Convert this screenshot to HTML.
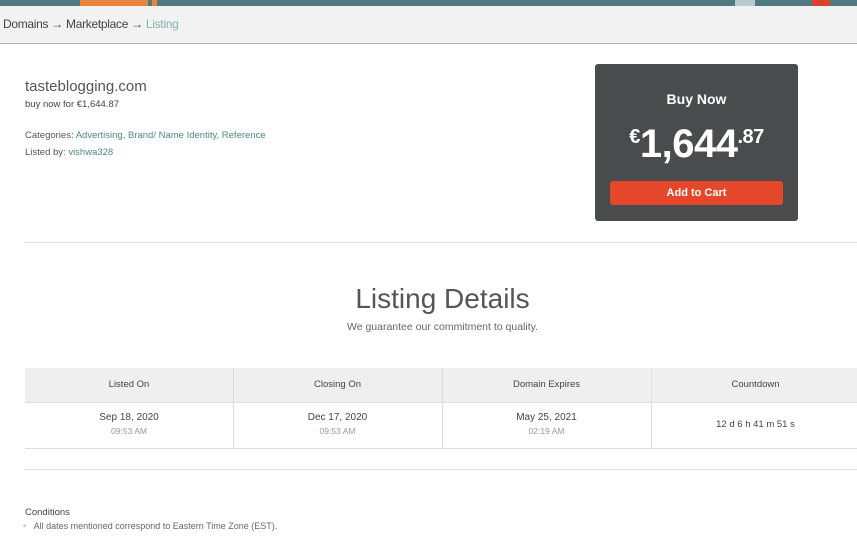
<!DOCTYPE html>
<html><head><style>
body{margin:0;width:857px;height:541px;overflow:hidden;background:#fff;font-family:"Liberation Sans",sans-serif;color:#444;position:relative}
.a{position:absolute}
</style></head><body>
<div class="a" style="left:0;top:0;width:857px;height:6px;background:#4f7b7f"></div>
<div class="a" style="left:80px;top:0;width:68px;height:6px;background:#e8843c"></div>
<div class="a" style="left:152px;top:0;width:5px;height:6px;background:#e8843c"></div>
<div class="a" style="left:812px;top:0;width:18px;height:6px;background:#d8412a"></div>
<div class="a" style="left:735px;top:0;width:20px;height:6px;background:#b9c9cc"></div>
<div class="a" style="left:0;top:6px;width:857px;height:37px;background:#f2f2f2;border-bottom:1.5px solid #a9bcb9"></div>
<div class="a" style="left:3px;top:17px;font-size:12px;color:#444;letter-spacing:-0.3px">Domains → Marketplace → <span style="color:#7fb4b0">Listing</span></div>

<div class="a" style="left:25px;top:78px;font-size:15px;color:#555">tasteblogging.com</div>
<div class="a" style="left:25px;top:99px;font-size:9.5px;color:#444">buy now for €1,644.87</div>
<div class="a" style="left:25px;top:130px;font-size:9.5px;color:#555">Categories: <span style="color:#4d8a86">Advertising, Brand/ Name Identity, Reference</span></div>
<div class="a" style="left:25px;top:147px;font-size:9.5px;color:#555">Listed by: <span style="color:#4d8a86">vishwa328</span></div>

<div class="a" style="left:595px;top:64px;width:203px;height:157px;background:#4a4b4d;border-radius:3px"></div>
<div class="a" style="left:595px;top:91px;width:203px;text-align:center;color:#fff;font-weight:bold;font-size:14px">Buy Now</div>
<div class="a" style="left:595px;top:112px;width:203px;text-align:center;color:#fff;font-weight:bold;font-size:40px;line-height:50px;letter-spacing:-0.5px"><span style="font-size:20px;vertical-align:14px">€</span>1,644<span style="font-size:20px;vertical-align:14px">.87</span></div>
<div class="a" style="left:610px;top:181px;width:173px;height:24px;background:#e5472b;border-radius:3px;color:#fff;font-weight:bold;font-size:11px;text-align:center;line-height:24px">Add to Cart</div>

<div class="a" style="left:25px;top:242px;width:832px;height:1px;background:#ddd"></div>
<div class="a" style="left:0;top:283px;width:885px;text-align:center;font-size:28px;color:#555">Listing Details</div>
<div class="a" style="left:0;top:321px;width:885px;text-align:center;font-size:10.5px;color:#666">We guarantee our commitment to quality.</div>

<div class="a" style="left:25px;top:368px;width:840px;height:34px;background:#efefef;border-bottom:1px solid #ddd"></div>
<div class="a" style="left:25px;top:448px;width:840px;height:1px;background:#ddd"></div>
<div class="a" style="left:233px;top:368px;width:1px;height:80px;background:#ddd"></div>
<div class="a" style="left:442px;top:368px;width:1px;height:80px;background:#ddd"></div>
<div class="a" style="left:651px;top:368px;width:1px;height:80px;background:#ddd"></div>
<div class="a" style="left:25px;top:379px;width:208px;text-align:center;font-size:9.5px">Listed On</div>
<div class="a" style="left:233px;top:379px;width:209px;text-align:center;font-size:9.5px">Closing On</div>
<div class="a" style="left:442px;top:379px;width:209px;text-align:center;font-size:9.5px">Domain Expires</div>
<div class="a" style="left:651px;top:379px;width:209px;text-align:center;font-size:9.5px">Countdown</div>
<div class="a" style="left:25px;top:412px;width:208px;text-align:center;font-size:10px">Sep 18, 2020<br><span style="font-size:8.5px;color:#999;line-height:17px">09:53 AM</span></div>
<div class="a" style="left:233px;top:412px;width:209px;text-align:center;font-size:10px">Dec 17, 2020<br><span style="font-size:8.5px;color:#999;line-height:17px">09:53 AM</span></div>
<div class="a" style="left:442px;top:412px;width:209px;text-align:center;font-size:10px">May 25, 2021<br><span style="font-size:8.5px;color:#999;line-height:17px">02:19 AM</span></div>
<div class="a" style="left:651px;top:419px;width:209px;text-align:center;font-size:9.5px">12 d 6 h 41 m 51 s</div>

<div class="a" style="left:25px;top:469px;width:832px;height:1px;background:#ddd"></div>
<div class="a" style="left:25px;top:507px;font-size:9.5px;color:#444">Conditions</div>
<div class="a" style="left:23px;top:521px;font-size:9px;color:#666"><span style="color:#bbb">•</span>&nbsp;&nbsp;&nbsp;All dates mentioned correspond to Eastern Time Zone (EST).</div>
</body></html>
